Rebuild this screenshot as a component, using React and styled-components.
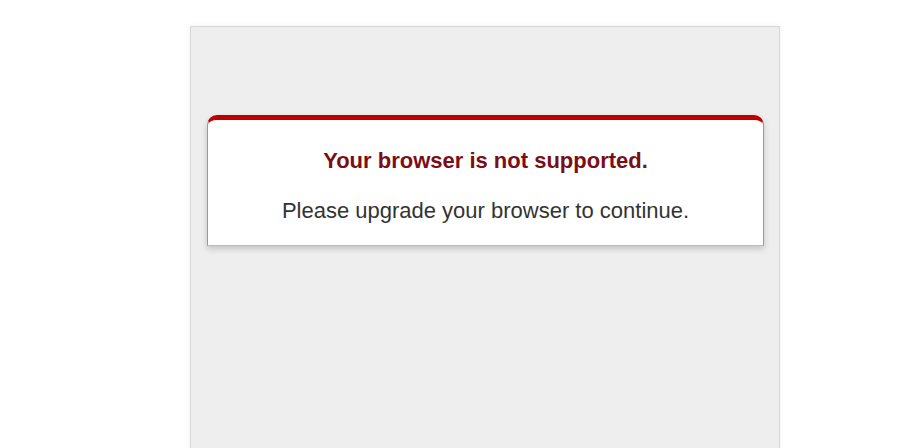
import React from "react";
import styled, { createGlobalStyle } from "styled-components";

const GlobalStyle = createGlobalStyle`
	html, body {
		margin: 0;
		padding: 0;
		background: #fff;
		font-family: "Liberation Sans", Arial, sans-serif;
	}
`;

const Page = styled.div`
	height: 448px;
	overflow: hidden;
	padding: 26px 0 0 190px;
	box-sizing: border-box;
`;

const Panel = styled.div`
	width: 590px;
	height: 440px;
	box-sizing: border-box;
	background: #eeeeee;
	border: 1px solid #d8d8d8;
	box-shadow: 0 0 6px rgba(0, 0, 0, 0.06);
	padding: 88px 15px 0 16px;
`;

const Notice = styled.div`
	background: #fff;
	border-top: 5px solid #c00000;
	border-left: 1px solid #999;
	border-right: 1px solid #999;
	border-bottom: 1px solid #bbb;
	border-radius: 10px 10px 0 0;
	box-shadow: 0 3px 6px rgba(0, 0, 0, 0.18);
	padding: 28px 20px 21px;
	text-align: center;
`;

const Title = styled.h2`
	margin: 0 0 24px;
	font-size: 22px;
	font-weight: bold;
	color: #7b0e14;
	line-height: 26px;
`;

const Message = styled.p`
	margin: 0;
	font-size: 22px;
	color: #333;
	line-height: 26px;
`;

const App = () => {
	return (
		<>
			<GlobalStyle />
			<Page>
				<Panel>
					<Notice>
						<Title>Your browser is not supported.</Title>
						<Message>Please upgrade your browser to continue.</Message>
					</Notice>
				</Panel>
			</Page>
		</>
	);
};

export default App;
